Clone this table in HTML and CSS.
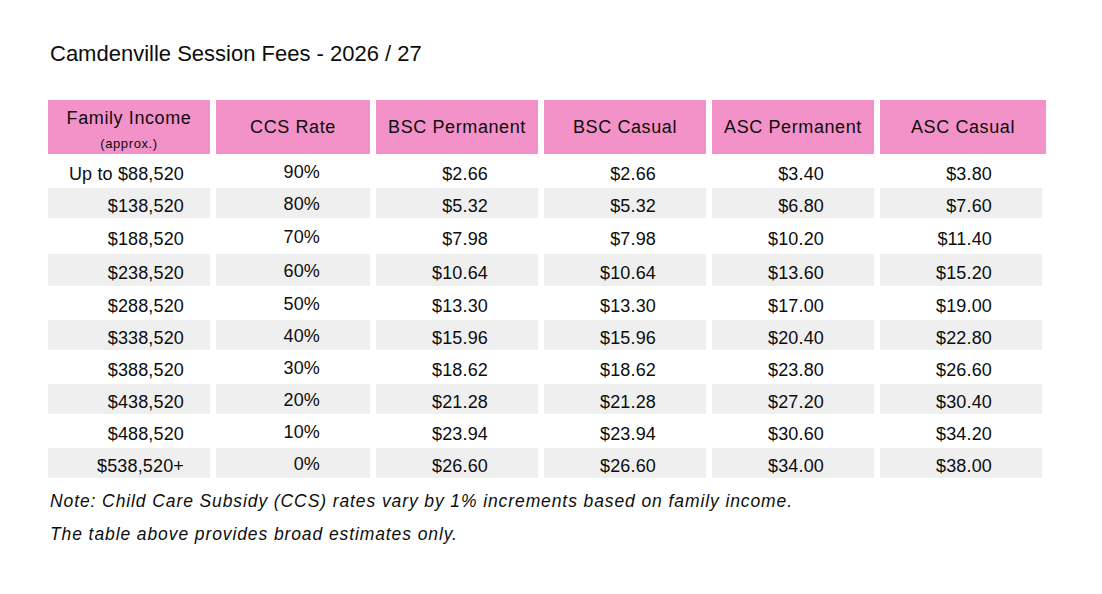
FILE: index.html
```html
<!DOCTYPE html>
<html lang="en">
<head>
<meta charset="utf-8">
<title>Camdenville Session Fees - 2026 / 27</title>
<link rel="stylesheet" href="styles.css">
</head>
<body>
<main class="page">
  <h1 class="title">Camdenville Session Fees - 2026 / 27</h1>
  <div class="fees" role="table">
    <div class="row head" role="row">
      <div class="cell c1 two" role="columnheader"><span class="l1">Family Income</span><span class="l2">(approx.)</span></div>
      <div class="cell" role="columnheader">CCS Rate</div>
      <div class="cell" role="columnheader">BSC Permanent</div>
      <div class="cell" role="columnheader">BSC Casual</div>
      <div class="cell" role="columnheader">ASC Permanent</div>
      <div class="cell last" role="columnheader">ASC Casual</div>
    </div>
    <div class="row" role="row">
      <div class="cell c1">Up to $88,520</div><div class="cell c2">90%</div><div class="cell">$2.66</div><div class="cell">$2.66</div><div class="cell">$3.40</div><div class="cell last">$3.80</div>
    </div>
    <div class="row alt" role="row">
      <div class="cell c1">$138,520</div><div class="cell c2">80%</div><div class="cell">$5.32</div><div class="cell">$5.32</div><div class="cell">$6.80</div><div class="cell last">$7.60</div>
    </div>
    <div class="row" role="row">
      <div class="cell c1">$188,520</div><div class="cell c2">70%</div><div class="cell">$7.98</div><div class="cell">$7.98</div><div class="cell">$10.20</div><div class="cell last">$11.40</div>
    </div>
    <div class="row alt" role="row">
      <div class="cell c1">$238,520</div><div class="cell c2">60%</div><div class="cell">$10.64</div><div class="cell">$10.64</div><div class="cell">$13.60</div><div class="cell last">$15.20</div>
    </div>
    <div class="row" role="row">
      <div class="cell c1">$288,520</div><div class="cell c2">50%</div><div class="cell">$13.30</div><div class="cell">$13.30</div><div class="cell">$17.00</div><div class="cell last">$19.00</div>
    </div>
    <div class="row alt" role="row">
      <div class="cell c1">$338,520</div><div class="cell c2">40%</div><div class="cell">$15.96</div><div class="cell">$15.96</div><div class="cell">$20.40</div><div class="cell last">$22.80</div>
    </div>
    <div class="row" role="row">
      <div class="cell c1">$388,520</div><div class="cell c2">30%</div><div class="cell">$18.62</div><div class="cell">$18.62</div><div class="cell">$23.80</div><div class="cell last">$26.60</div>
    </div>
    <div class="row alt" role="row">
      <div class="cell c1">$438,520</div><div class="cell c2">20%</div><div class="cell">$21.28</div><div class="cell">$21.28</div><div class="cell">$27.20</div><div class="cell last">$30.40</div>
    </div>
    <div class="row" role="row">
      <div class="cell c1">$488,520</div><div class="cell c2">10%</div><div class="cell">$23.94</div><div class="cell">$23.94</div><div class="cell">$30.60</div><div class="cell last">$34.20</div>
    </div>
    <div class="row alt" role="row">
      <div class="cell c1">$538,520+</div><div class="cell c2">0%</div><div class="cell">$26.60</div><div class="cell">$26.60</div><div class="cell">$34.00</div><div class="cell last">$38.00</div>
    </div>
  </div>
  <p class="note">Note: Child Care Subsidy (CCS) rates vary by 1% increments based on family income.</p>
  <p class="note">The table above provides broad estimates only.</p>
</main>
</body>
</html>
```

FILE: styles.css
```css
html, body {
  margin: 0;
  padding: 0;
  background: #ffffff;
}

body {
  font-family: "Liberation Sans", Arial, sans-serif;
  color: #0d0d0d;
}

.page {
  padding: 41px 0 0 48px;
}

.title {
  margin: 0 0 33px 2px;
  font-size: 22px;
  line-height: 26px;
  font-weight: 400;
  letter-spacing: 0;
}

.fees {
  display: grid;
  grid-template-columns: 162px 154px 162px 162px 162px 166px;
  grid-template-rows: 54px 34px 30px 36px 32px 34px 30px 34px 30px 34px 30px;
  column-gap: 6px;
  width: 998px;
}

.row {
  display: contents;
}

.cell {
  display: flex;
  align-items: center;
  justify-content: flex-end;
  box-sizing: border-box;
  padding: 5px 50px 0 0;
  font-size: 18px;
  line-height: 22px;
  letter-spacing: 0.15px;
  white-space: nowrap;
}

.cell.c1 {
  padding-right: 26px;
}

.cell.c2 {
  padding-top: 1px;
  padding-bottom: 0;
}

.cell.last {
  padding-right: 54px;
}

.alt > .cell {
  background: #efefef;
}

.alt > .cell.last {
  box-shadow: inset -4px 0 0 #ffffff;
}

.head > .cell {
  background: #f292c8;
  justify-content: center;
  padding: 0;
  letter-spacing: 0.6px;
}

.head > .cell.two {
  flex-direction: column;
  justify-content: flex-start;
  align-items: center;
  padding-top: 7px;
}

.l1 {
  display: block;
  line-height: 22px;
}

.l2 {
  display: block;
  margin-top: 7px;
  font-size: 13px;
  line-height: 16px;
  letter-spacing: 0.6px;
}

.note {
  margin: 7px 0 0 2px;
  font-size: 17.5px;
  line-height: 33px;
  font-style: italic;
  letter-spacing: 0.9px;
}

.note + .note {
  margin-top: 0;
}
```
